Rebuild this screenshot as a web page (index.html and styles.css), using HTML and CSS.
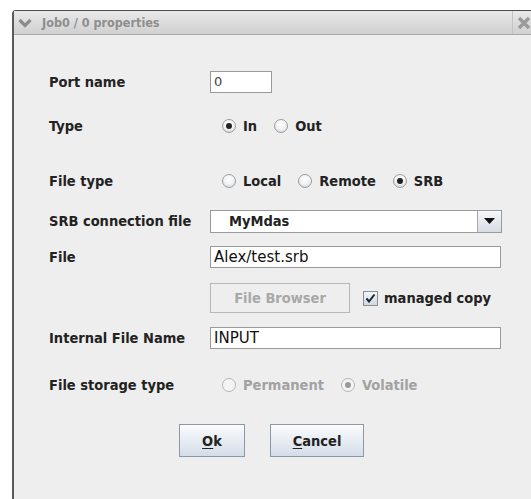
FILE: index.html
```html
<!DOCTYPE html>
<html>
<head>
<meta charset="utf-8">
<link rel="stylesheet" href="styles.css">
</head>
<body>
<div class="window">
  <div class="titlebar">
    <svg class="chev" width="14" height="10" viewBox="0 0 14 10"><path d="M1.5 2 L7 7.5 L12.5 2" fill="none" stroke="#8c8c8c" stroke-width="3.2" stroke-linejoin="miter"/></svg>
    <span class="title">Job0 / 0 properties</span>
    <div class="close">
      <svg width="16" height="14" viewBox="0 0 16 14"><path d="M3 2 L13 12 M13 2 L3 12" stroke="#9a9a9a" stroke-width="3.4"/></svg>
    </div>
  </div>
  <div class="content">
    <div class="form">
      <div class="lbl">Port name</div>
      <div class="ctl"><div class="field short">0</div></div>

      <div class="lbl">Type</div>
      <div class="ctl radios">
        <span class="radio"><i class="dot on"></i>In</span>
        <span class="radio"><i class="dot"></i>Out</span>
      </div>

      <div class="lbl">File type</div>
      <div class="ctl radios">
        <span class="radio"><i class="dot"></i>Local</span>
        <span class="radio"><i class="dot"></i>Remote</span>
        <span class="radio"><i class="dot on"></i>SRB</span>
      </div>

      <div class="lbl">SRB connection file</div>
      <div class="ctl">
        <div class="combo"><span class="combo-text">MyMdas</span><span class="combo-btn"><svg width="11" height="7" viewBox="0 0 11 7"><path d="M0 0 H11 L5.5 6 Z" fill="#111"/></svg></span></div>
      </div>

      <div class="lbl">File</div>
      <div class="ctl"><div class="field wide">Alex/test.srb</div></div>

      <div class="lbl"></div>
      <div class="ctl browse">
        <span class="btn disabled">File Browser</span>
        <span class="check"><i class="box"><svg width="11" height="10" viewBox="0 0 11 10"><path d="M1.5 5.5 L4 8.5 L9.5 1.5" fill="none" stroke="#1c2430" stroke-width="2"/></svg></i>managed copy</span>
      </div>

      <div class="lbl">Internal File Name</div>
      <div class="ctl"><div class="field wide">INPUT</div></div>

      <div class="lbl">File storage type</div>
      <div class="ctl radios off">
        <span class="radio"><i class="dot"></i>Permanent</span>
        <span class="radio"><i class="dot on"></i>Volatile</span>
      </div>
    </div>
    <div class="actions">
      <span class="btn push"><u>O</u>k</span>
      <span class="btn push cancel"><u>C</u>ancel</span>
    </div>
  </div>
</div>
</body>
</html>
```
FILE: styles.css
```css
html, body {
  margin: 0;
  padding: 0;
  background: #ffffff;
  width: 531px;
  height: 499px;
  overflow: hidden;
}

.window {
  margin: 10px 0 0 12px;
  height: 489px;
  width: 540px;
  background: #eeeeee;
  border-left: 2px solid #5a5a5a;
  border-top: 1px solid #4a4a4a;
  border-top-left-radius: 4px;
  font-family: "DejaVu Sans Condensed", "DejaVu Sans", sans-serif;
  font-stretch: condensed;
}

.titlebar {
  height: 23px;
  display: flex;
  align-items: center;
  background: linear-gradient(#e9e9e9, #d0d0d0);
  border-bottom: 1px solid #a8a8a8;
}
.chev { margin: 0 0 0 4px; }
.title {
  margin-left: 10px;
  font-size: 12.5px;
  font-weight: bold;
  color: #8e8e8e;
}
.close {
  margin-left: auto;
  width: 38px;
  height: 23px;
  border-left: 1px solid #c4c4c4;
  display: flex;
  align-items: center;
  padding-left: 3px;
}

.content {
  padding: 35px 0 0 35px;
}

.form {
  display: grid;
  grid-template-columns: 161px 292px;
  grid-template-rows: 24px 64px 46px 34px 38px 44px 36px 58px;
  align-items: center;
}

.lbl {
  font-size: 14.5px;
  font-weight: bold;
  color: #222;
}

.ctl { display: flex; align-items: center; }

.field {
  box-sizing: border-box;
  height: 22px;
  background: #fff;
  border: 1px solid #9a9a9a;
  font-family: "DejaVu Sans", sans-serif;
  font-stretch: normal;
  font-size: 15px;
  line-height: 20px;
  padding-left: 3px;
  color: #111;
}
.field.short { width: 62px; font-size: 13px; color: #444; }
.field.wide { width: 291px; }

.radios { padding-left: 12px; }
.radio {
  display: inline-flex;
  align-items: center;
  font-size: 14.5px;
  font-weight: bold;
  color: #222;
  margin-right: 17px;
}
.dot {
  box-sizing: border-box;
  width: 14px;
  height: 14px;
  border-radius: 50%;
  border: 1px solid #9c9c9c;
  background: radial-gradient(circle at 50% 35%, #ffffff 0%, #f0f2f4 50%, #c9cfd6 100%);
  margin-right: 7px;
  display: inline-flex;
  align-items: center;
  justify-content: center;
}
.dot.on::after {
  content: "";
  width: 6px;
  height: 6px;
  border-radius: 50%;
  background: #222;
}
.radios.off .radio { color: #a2a2a2; }
.radios.off .dot { border-color: #b5b5b5; background: #f4f4f4; }
.radios.off .dot.on::after { background: #9a9a9a; }

.combo {
  box-sizing: border-box;
  width: 292px;
  height: 23px;
  display: flex;
  background: #fff;
  border: 1px solid #9a9a9a;
}
.combo-text {
  flex: 1;
  padding-left: 18px;
  font-size: 14.5px;
  font-weight: bold;
  line-height: 21px;
  color: #222;
}
.combo-btn {
  width: 23px;
  border-left: 1px solid #a8a8a8;
  background: linear-gradient(#f6f7f9, #d6dde5);
  display: flex;
  align-items: center;
  justify-content: center;
}

.btn {
  box-sizing: border-box;
  display: inline-flex;
  align-items: center;
  justify-content: center;
  font-size: 14.5px;
  font-weight: bold;
}
.btn.disabled {
  width: 140px;
  height: 30px;
  border: 1px solid #b8b8b8;
  background: #eeeeee;
  color: #a8a8a8;
}
.browse { gap: 13px; }
.check {
  display: inline-flex;
  align-items: center;
  font-size: 14.5px;
  font-weight: bold;
  color: #222;
}
.box {
  box-sizing: border-box;
  width: 15px;
  height: 15px;
  border: 1px solid #8a8f96;
  background: linear-gradient(#f2f5f8, #cfd8e2);
  display: inline-flex;
  align-items: center;
  justify-content: center;
  margin-right: 6px;
}

.actions {
  display: flex;
  gap: 25px;
  padding-left: 130px;
  margin-top: 10px;
}
.btn.push {
  width: 66px;
  height: 33px;
  border: 1px solid #8c98a6;
  background: linear-gradient(#fbfcfd, #d3dde8);
  color: #222;
}
.btn.push.cancel { width: 94px; }
.btn u { text-decoration-thickness: 1px; text-underline-offset: 2px; }
```
